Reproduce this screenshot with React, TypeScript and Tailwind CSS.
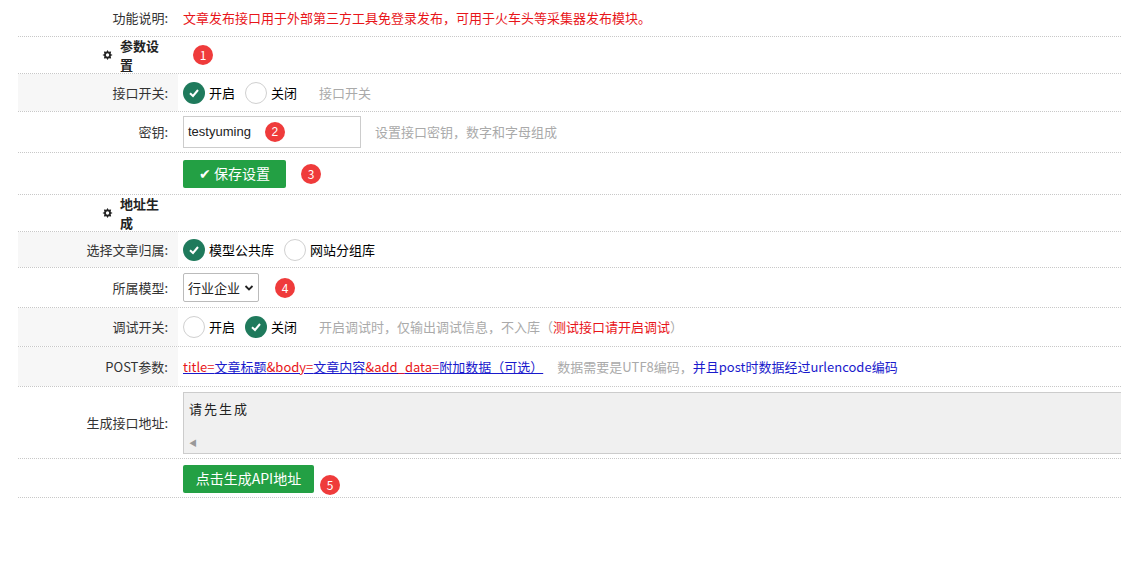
import React from "react";

const Row = ({ label, gray, h, children, header }: any) => (
  <div className="flex border-b border-dotted border-[#c8c8c8]" style={{ height: h }}>
    <div className={`w-[160px] shrink-0 flex items-center justify-end pr-[10px] ${gray ? "bg-[#f7f7f7]" : ""} ${header ? "font-bold text-[#222]" : "text-[#333]"}`}>{label}</div>
    <div className="flex items-center pl-[5px] flex-1 min-w-0">{children}</div>
  </div>
);

const Badge = ({ n }: { n: number }) => (
  <span className="inline-flex w-[20px] h-[20px] rounded-full bg-[#ef3b3b] text-white text-[12px] items-center justify-center">{n}</span>
);

const Radio = ({ on, label }: { on?: boolean; label: string }) => (
  <span className="inline-flex items-center mr-[10px]">
    {on ? (
      <span className="w-[22px] h-[22px] rounded-full bg-[#1f7a5c] flex items-center justify-center">
        <svg width="12" height="12" viewBox="0 0 12 12"><path d="M2 6.2 L5 9 L10 3" stroke="white" strokeWidth="2" fill="none" /></svg>
      </span>
    ) : (
      <span className="w-[22px] h-[22px] rounded-full border border-[#d0d0d0] bg-white" />
    )}
    <span className="ml-[4px]">{label}</span>
  </span>
);

const Gear = () => (
  <svg width="12" height="12" viewBox="0 0 12 12" className="mr-[7px]"><path d="M6 0.5 L7.2 2.6 L9.9 2.1 L9.4 4.8 L11.5 6 L9.4 7.2 L9.9 9.9 L7.2 9.4 L6 11.5 L4.8 9.4 L2.1 9.9 L2.6 7.2 L0.5 6 L2.6 4.8 L2.1 2.1 L4.8 2.6 Z" fill="#222"/><circle cx="6" cy="6" r="1.8" fill="white"/></svg>
);

export default function App() {
  return (
    <div className="w-[1121px] h-[574px] bg-white overflow-hidden text-[13px]" style={{ fontFamily: '"Microsoft YaHei","Noto Sans CJK SC","Noto Sans",sans-serif' }}>
      <div className="ml-[18px]">
        <Row label="功能说明:" h={37}><span className="text-[#e8151a]">文章发布接口用于外部第三方工具免登录发布，可用于火车头等采集器发布模块。</span></Row>
        <Row h={37} header label={<span className="flex items-center w-full pl-[84px]"><Gear />参数设置</span>}><span className="ml-[10px]"><Badge n={1} /></span></Row>
        <Row label="接口开关:" gray h={38}><Radio on label="开启" /><Radio label="关闭" /><span className="text-[#aaa] ml-[12px]">接口开关</span></Row>
        <Row label="密钥:" h={41}>
          <div className="w-[178px] h-[32px] border border-[#ccc] flex items-center pl-[4px] text-[#222]" style={{ fontFamily: '"Liberation Sans",sans-serif' }}>testyuming<span className="ml-[14px]"><Badge n={2} /></span></div>
          <span className="text-[#aaa] ml-[14px]">设置接口密钥，数字和字母组成</span>
        </Row>
        <Row label="" h={42}>
          <button className="bg-[#23a044] text-white w-[103px] h-[28px] rounded-[2px] text-[14px] flex items-center justify-center">✔ 保存设置</button>
          <span className="ml-[15px]"><Badge n={3} /></span>
        </Row>
        <Row h={37} header label={<span className="flex items-center w-full pl-[84px]"><Gear />地址生成</span>} />
        <Row label="选择文章归属:" gray h={36}><Radio on label="模型公共库" /><Radio label="网站分组库" /></Row>
        <Row label="所属模型:" h={40}>
          <span className="h-[29px] border border-[#bbb] rounded-[2px] flex items-center px-[4px] text-[#222]">行业企业
            <svg width="10" height="8" viewBox="0 0 10 8" className="ml-[4px]"><path d="M1.5 2 L5 5.5 L8.5 2" stroke="#222" strokeWidth="1.8" fill="none"/></svg>
          </span>
          <span className="ml-[16px]"><Badge n={4} /></span>
        </Row>
        <Row label="调试开关:" gray h={39}><Radio label="开启" /><Radio on label="关闭" /><span className="text-[#aaa] ml-[12px]">开启调试时，仅输出调试信息，不入库（<span className="text-[#e8151a]">测试接口请开启调试</span>）</span></Row>
        <Row label="POST参数:" gray h={40}>
          <span className="underline decoration-[#1a1acc]"><span className="text-[#e8151a]">title=</span><span className="text-[#1a1acc]">文章标题</span><span className="text-[#e8151a]">&amp;body=</span><span className="text-[#1a1acc]">文章内容</span><span className="text-[#e8151a]">&amp;add_data=</span><span className="text-[#1a1acc]">附加数据（可选）</span></span>
          <span className="text-[#aaa] ml-[14px]">数据需要是UTF8编码，<span className="text-[#1a1acc]">并且post时数据经过urlencode编码</span></span>
        </Row>
        <Row label="生成接口地址:" h={72}>
          <div className="h-[62px] flex-1 bg-[#f0f0f0] border border-[#ccc] border-r-0 relative pl-[5px] pt-[6px] tracking-[2px] text-[#222]">请先生成
            <span className="absolute left-[5px] bottom-[4px] text-[8px] text-[#999]">◀</span>
          </div>
        </Row>
        <Row label="" h={39}>
          <button className="bg-[#23a044] text-white w-[131px] h-[28px] rounded-[2px] text-[14px] mt-[1px]">点击生成API地址</button>
          <span className="ml-[6px] mt-[14px]"><Badge n={5} /></span>
        </Row>
      </div>
    </div>
  );
}
